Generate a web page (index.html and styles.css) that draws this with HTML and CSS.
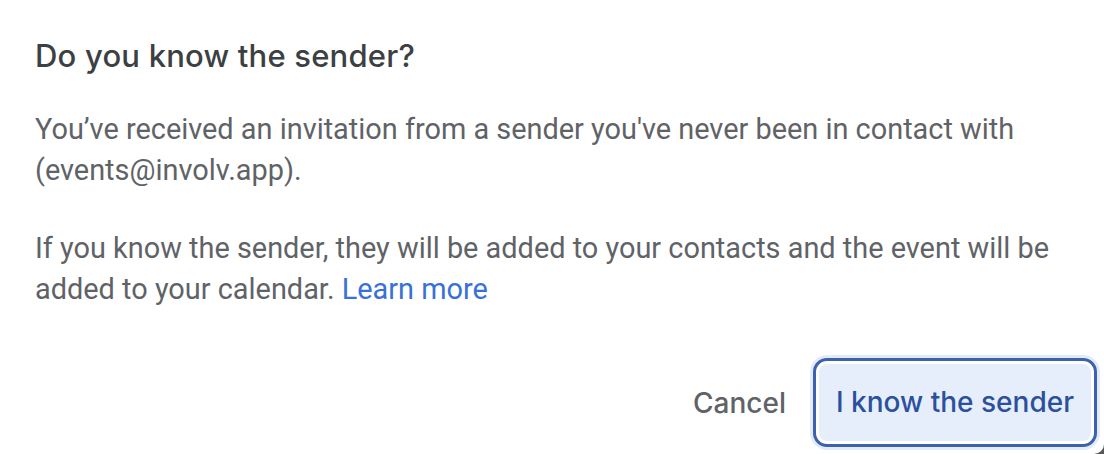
FILE: index.html
```html
<!DOCTYPE html>
<html>
<head>
    <meta charset="UTF-8">
    <title>Do you know the sender?</title>
    <link rel="stylesheet" href="styles.css">
</head>
<body>
<div class="dialog">
    <div class="content">
        <h1 class="title">Do you know the sender?</h1>
        <p>You’ve received an invitation from a sender you've never been in contact with (events@involv.app).</p>
        <p>If you know the sender, they will be added to your contacts and the event will be added to your calendar. <a href="#">Learn more</a></p>
    </div>
    <div class="actions">
        <button class="btn-text">Cancel</button>
        <button class="btn-primary"><span>I know the sender</span></button>
    </div>
</div>
</body>
</html>
```

FILE: styles.css
```css
* {
    margin: 0;
    padding: 0;
    box-sizing: border-box;
}

html, body {
    width: 1104px;
    height: 454px;
    overflow: hidden;
}

body {
    background: #575757;
}

.dialog {
    display: flex;
    flex-direction: column;
    width: 1104px;
    height: 454px;
    background: #fff;
    border-bottom-right-radius: 10px;
}

.content {
    padding: 36px 35px 0 35px;
    width: 1090px;
}

.title {
    font-family: Inter, sans-serif;
    font-weight: 500;
    font-size: 31px;
    line-height: 40px;
    letter-spacing: 0.2px;
    color: #3c4043;
    margin-bottom: 33px;
}

.content p {
    font-family: Roboto, "Liberation Sans", sans-serif;
    font-size: 28.9px;
    line-height: 41px;
    color: #5f6368;
    margin-bottom: 37px;
}

.content a {
    color: #3871d8;
    text-decoration: none;
}

.actions {
    margin-top: auto;
    display: flex;
    justify-content: flex-end;
    align-items: center;
    gap: 4px;
    padding: 0 7px 7px 0;
}

.actions button {
    font-family: Inter, sans-serif;
    font-weight: 500;
    font-size: 28px;
    border: none;
    background: none;
    cursor: pointer;
}

.btn-text {
    color: #5f6368;
    padding: 0 23px;
    height: 89px;
}

.btn-primary {
    color: #2b519d;
    border: 3px solid #3c62ae !important;
    border-radius: 14px;
    padding: 3px;
    background: #e7eefb !important;
    background-clip: content-box !important;
    box-shadow: 0 0 0 3px #e4ebf8;
}

.btn-primary span {
    display: block;
    height: 77px;
    line-height: 77px;
    padding: 0 17px;
}
```
